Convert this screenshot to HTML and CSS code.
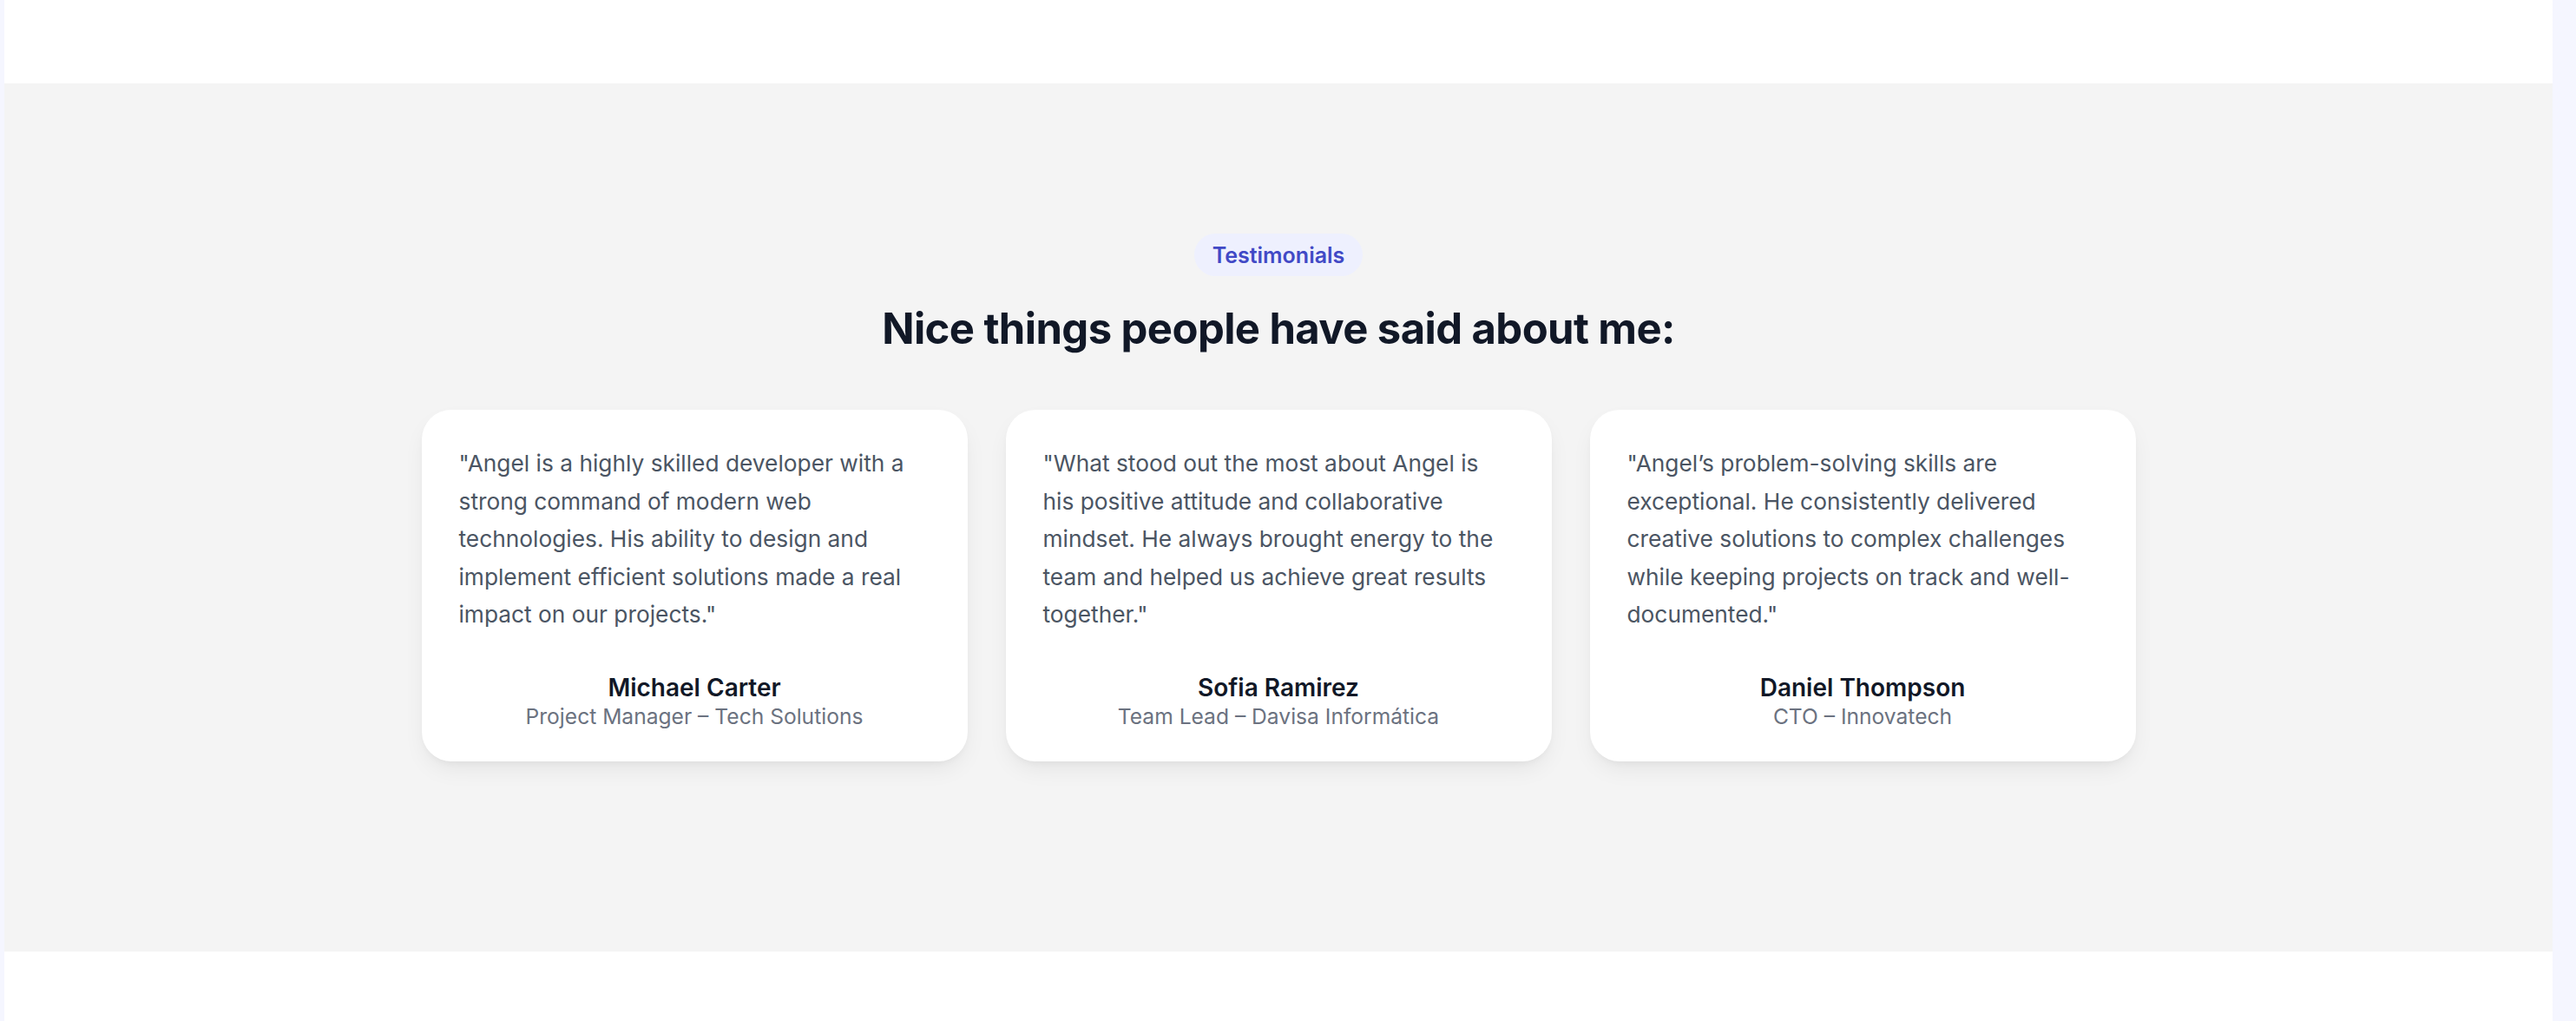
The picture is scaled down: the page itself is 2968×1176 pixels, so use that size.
FILE: index.html
```html
<!DOCTYPE html>
<html lang="en">
<head>
<meta charset="utf-8">
<title>Testimonials</title>
<link rel="stylesheet" href="styles.css">
</head>
<body>
<div class="page">
  <div class="top-band"></div>
  <section class="testimonials">
    <span class="badge">Testimonials</span>
    <h2 class="title">Nice things people have said about me:</h2>
    <div class="cards">
      <article class="card">
        <p class="quote">"Angel is a highly skilled developer with a strong command of modern web technologies. His ability to design and implement efficient solutions made a real impact on our projects."</p>
        <div class="author">
          <div class="name">Michael Carter</div>
          <div class="role">Project Manager – Tech Solutions</div>
        </div>
      </article>
      <article class="card">
        <p class="quote">"What stood out the most about Angel is his positive attitude and collaborative mindset. He always brought energy to the team and helped us achieve great results together."</p>
        <div class="author">
          <div class="name">Sofia Ramirez</div>
          <div class="role">Team Lead – Davisa Informática</div>
        </div>
      </article>
      <article class="card">
        <p class="quote">"Angel’s problem-solving skills are exceptional. He consistently delivered creative solutions to complex challenges while keeping projects on track and well-documented."</p>
        <div class="author">
          <div class="name">Daniel Thompson</div>
          <div class="role">CTO – Innovatech</div>
        </div>
      </article>
    </div>
  </section>
  <div class="bottom-band"></div>
</div>
</body>
</html>
```
FILE: styles.css
```css
* { box-sizing: border-box; }
html, body { margin: 0; padding: 0; }
body {
  background: #f5f6ff;
  font-family: Inter, "Noto Sans", "Liberation Sans", sans-serif;
  padding: 0 27px 0 5px;
}
.page {
  display: flex;
  flex-direction: column;
  height: 1176px;
}
.top-band {
  height: 96px;
  background: #ffffff;
}
.bottom-band {
  flex: 1;
  background: #ffffff;
}
.testimonials {
  background: #f4f4f4;
  height: 1000px;
  padding-top: 173px;
  display: flex;
  flex-direction: column;
  align-items: center;
}
.badge {
  display: inline-block;
  background: #eef0fe;
  color: #4149c6;
  font-size: 25px;
  font-weight: 600;
  line-height: 36px;
  padding: 6.5px 21px;
  border-radius: 999px;
}
.title {
  margin: 31px 0 0;
  font-size: 49px;
  line-height: 60px;
  font-weight: 700;
  color: #111827;
  letter-spacing: -0.6px;
}
.cards {
  margin-top: 63px;
  display: grid;
  grid-template-columns: repeat(3, 629px);
  gap: 44px;
}
.card {
  background: #ffffff;
  border-radius: 34px;
  padding: 40px 48px 36px 43px;
  box-shadow: 0 12px 28px -6px rgba(0, 0, 0, 0.08), 0 4px 10px -4px rgba(0, 0, 0, 0.06);
  display: flex;
  flex-direction: column;
}
.quote {
  margin: 0 0 45px;
  font-size: 26.3px;
  line-height: 43.5px;
  color: #4b5563;
}
.author {
  text-align: center;
  padding-left: 5px;
}
.name {
  font-size: 28px;
  font-weight: 600;
  line-height: 34px;
  color: #111827;
}
.role {
  font-size: 24.6px;
  line-height: 32px;
  color: #6b7280;
}
```
